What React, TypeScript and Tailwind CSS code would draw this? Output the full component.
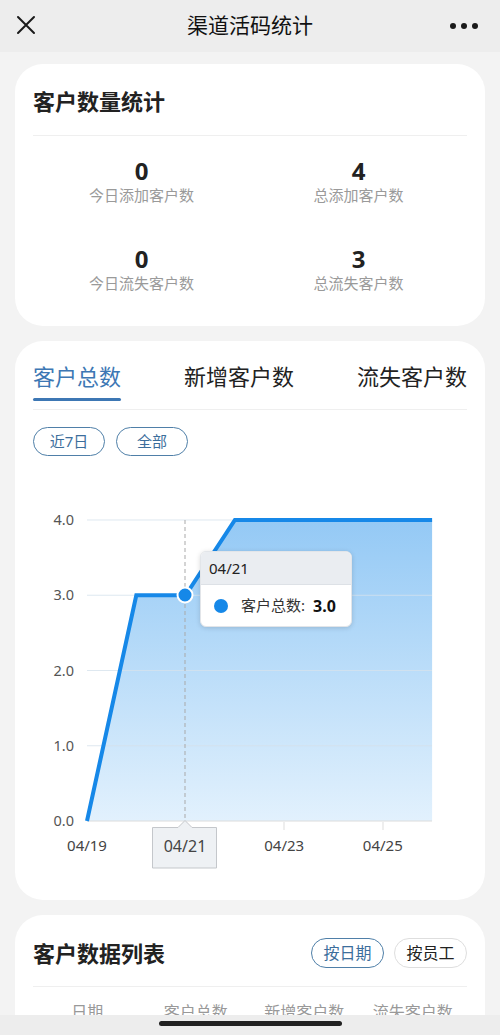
import React from 'react';

const FONT = { fontFamily: '"Noto Sans", "Noto Sans CJK SC", sans-serif' };

const stats = [
  { value: 0, label: '今日添加客户数' },
  { value: 4, label: '总添加客户数' },
  { value: 0, label: '今日流失客户数' },
  { value: 3, label: '总流失客户数' },
];

const series = [0, 3, 3, 4, 4, 4, 4, 4];
const X0 = 87;
const DX = 49.3;
const Y0 = 819;
const DY = 75.25;

const TrendChart = () => {
  const pts = series.map((v, i) => [X0 + i * DX, Y0 - v * DY]);
  const line = pts.map((p, i) => `${i === 0 ? 'M' : 'L'}${p[0]},${p[1]}`).join(' ');
  const area = `${line} L${pts[pts.length - 1][0]},${Y0} L${X0},${Y0} Z`;
  const yTicks = [4, 3, 2, 1, 0];
  const xLabels = [
    { i: 0, t: '04/19' },
    { i: 4, t: '04/23' },
    { i: 6, t: '04/25' },
  ];

  return (
    <div className="relative h-[428px]">
      <svg width="470" height="428" className="block">
        <defs>
          <linearGradient id="fill" x1="0" y1="0" x2="0" y2="1">
            <stop offset="0%" stopColor="#94c9f5" />
            <stop offset="100%" stopColor="#e2f1fd" />
          </linearGradient>
        </defs>
        <g transform="translate(-15,-454)">
          <path d={area} fill="url(#fill)" />
          {yTicks.map((v) => (
            <g key={v}>
              <line x1={X0} x2={432} y1={Y0 - v * DY} y2={Y0 - v * DY} stroke={v === 0 ? '#dcdcdc' : '#d6e2ec'} strokeOpacity={v === 0 ? 1 : 0.8} strokeWidth="1" />
              <text x={74} y={Y0 - v * DY + 5} textAnchor="end" fontSize="14.5" fill="#555" style={FONT}>
                {v.toFixed(1)}
              </text>
            </g>
          ))}
          <line x1={185} x2={185} y1={518} y2={819} stroke="#a9a9a9" strokeWidth="1" strokeDasharray="4 3" />
          <line x1={284} x2={284} y1={820} y2={828} stroke="#ddd" />
          <line x1={383} x2={383} y1={820} y2={828} stroke="#ddd" />
          <path d={line} fill="none" stroke="#1688e8" strokeWidth="4" strokeLinejoin="miter" />
          <circle cx={185} cy={593} r="7.5" fill="#1688e8" stroke="#fff" strokeWidth="2" />
          {xLabels.map((l) => (
            <text key={l.t} x={X0 + l.i * DX} y={849} textAnchor="middle" fontSize="15" fill="#444" style={FONT}>
              {l.t}
            </text>
          ))}
          <path d="M152.5,866 L152.5,825.5 L178,825.5 L185,818.5 L192,825.5 L216.5,825.5 L216.5,866 Z" fill="#eef1f4" stroke="#c4c7cb" strokeWidth="1" strokeLinejoin="round" />
          <text x={185} y={850} textAnchor="middle" fontSize="16" fill="#444" style={FONT}>
            04/21
          </text>
        </g>
      </svg>

      <div className="absolute left-[185px] top-[95px] w-[152px] rounded-[6px] bg-white shadow-[0_1px_5px_rgba(0,0,0,0.15)] overflow-hidden border border-[#e2e5e9]">
        <div className="h-[33px] bg-[#eaedf1] border-b border-[#dde1e6] px-[8px] flex items-center text-[15px] text-[#222]">
          04/21
        </div>
        <div className="h-[41px] flex items-center px-[13px]">
          <span className="w-[14px] h-[14px] rounded-full bg-[#1688e8]" />
          <span className="ml-[13px] text-[15px] text-[#333]">客户总数:</span>
          <span className="ml-[8px] text-[16px] font-bold text-[#111]">3.0</span>
        </div>
      </div>
    </div>
  );
};

export default function App() {
  return (
    <div className="min-h-screen bg-[#f3f3f3] relative" style={FONT}>
      {/* Nav bar */}
      <div className="h-[52px] bg-[#ededed] flex items-center justify-between px-[16px] relative">
        <svg width="20" height="20" viewBox="0 0 20 20" className="mt-[-2px]">
          <path d="M2 2 L18 18 M18 2 L2 18" stroke="#1a1a1a" strokeWidth="2" strokeLinecap="round" />
        </svg>
        <div className="absolute left-0 right-0 text-center text-[21px] text-[#111] pointer-events-none">渠道活码统计</div>
        <div className="flex gap-[5px] mr-[6px]">
          <span className="w-[6px] h-[6px] rounded-full bg-[#1a1a1a]" />
          <span className="w-[6px] h-[6px] rounded-full bg-[#1a1a1a]" />
          <span className="w-[6px] h-[6px] rounded-full bg-[#1a1a1a]" />
        </div>
      </div>

      <div className="px-[15px] pt-[12px] flex flex-col gap-[15px]">
        {/* Stats card */}
        <div className="bg-white rounded-[28px] px-[18px] pt-[22px] pb-[32px]">
          <div className="text-[22px] leading-[30px] font-semibold text-[#222] pb-[19px] border-b border-[#efefef]">
            客户数量统计
          </div>
          <div className="grid grid-cols-2 gap-y-[40px] pt-[22px]">
            {stats.map((s) => (
              <div key={s.label} className="flex flex-col items-center">
                <div className="text-[24px] leading-[26px] font-bold text-[#222]">{s.value}</div>
                <div className="text-[15px] leading-[22px] text-[#9a9a9a]">{s.label}</div>
              </div>
            ))}
          </div>
        </div>

        {/* Chart card */}
        <div className="bg-white rounded-[28px] pt-[20px] pb-[16px]">
          <div className="mx-[18px] flex justify-between border-b border-[#efefef] pb-[8px]">
            <div className="flex flex-col">
              <span className="text-[22px] leading-[30px] text-[#3d77b4]">客户总数</span>
              <span className="mt-[7px] h-[3px] bg-[#3d77b4] rounded-full" />
            </div>
            <span className="text-[22px] leading-[30px] text-[#222]">新增客户数</span>
            <span className="text-[22px] leading-[30px] text-[#222]">流失客户数</span>
          </div>
          <div className="mx-[18px] mt-[17px] flex gap-[11px]">
            <button className="h-[29px] w-[72px] rounded-full border border-[#4f7fa8] text-[15px] text-[#3c6e9c]">近7日</button>
            <button className="h-[29px] w-[72px] rounded-full border border-[#4f7fa8] text-[15px] text-[#3c6e9c]">全部</button>
          </div>
          <TrendChart />
        </div>

        {/* Data list card */}
        <div className="bg-white rounded-[28px] px-[18px] pt-[23px] pb-[30px]">
          <div className="flex items-center justify-between pb-[18px] border-b border-[#efefef]">
            <span className="text-[22px] leading-[30px] font-semibold text-[#222]">客户数据列表</span>
            <div className="flex gap-[10px]">
              <button className="h-[30px] w-[73px] rounded-full border border-[#4f7fa8] text-[16px] text-[#3c6e9c]">按日期</button>
              <button className="h-[30px] w-[73px] rounded-full border border-[#dedede] text-[16px] text-[#222]">按员工</button>
            </div>
          </div>
          <div className="grid grid-cols-4 pt-[13px] text-center text-[16px] leading-[24px] text-[#999]">
            <span>日期</span>
            <span>客户总数</span>
            <span>新增客户数</span>
            <span>流失客户数</span>
          </div>
        </div>
      </div>

      {/* Home indicator bar */}
      <div className="fixed bottom-0 left-0 right-0 h-[20px] bg-[#ededed] flex justify-center">
        <span className="mt-[6px] w-[183px] h-[5px] rounded-full bg-[#222]" />
      </div>
    </div>
  );
}
